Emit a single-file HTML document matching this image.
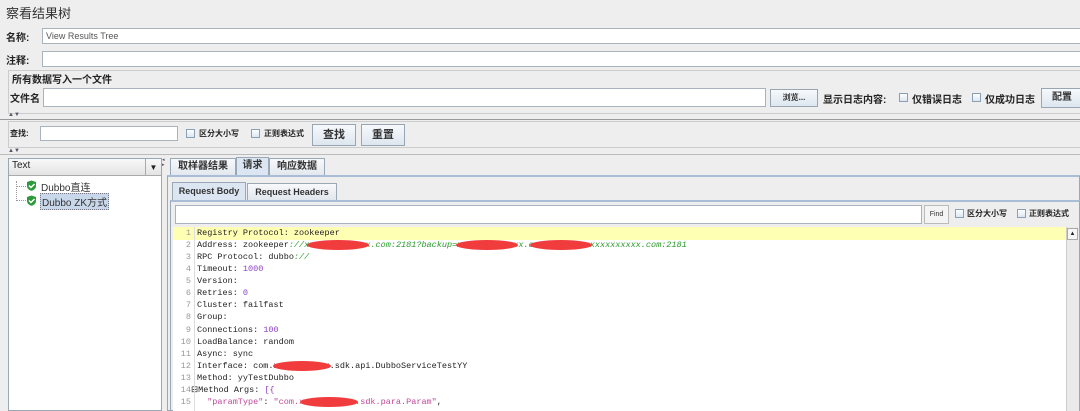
<!DOCTYPE html>
<html><head><meta charset="utf-8"><style>
*{box-sizing:border-box;margin:0;padding:0}
body{width:1080px;height:411px;overflow:hidden;background:#eeeeee;font-family:"Liberation Sans","Noto Sans CJK SC",sans-serif;font-size:10px;color:#222;position:relative}
.a{position:absolute}
.in{position:absolute;background:#fff;border:1px solid #a9b3bd}
.btn{position:absolute;border:1px solid #98a6b4;background:linear-gradient(#f6f9fc,#dde6ef);text-align:center;font-size:10px;font-weight:bold;color:#333}
.cb{position:absolute;width:9px;height:9px;border:1px solid #8aa0b4;background:linear-gradient(#fff,#dbe6f0)}
.code{position:absolute;left:173px;top:227px;width:893px;height:184px;background:#fff;font-family:"Liberation Mono",monospace;font-size:8.5px;overflow:hidden}
.ln{position:absolute;left:0;width:892px;height:12.07px;line-height:12px;white-space:pre}
.ln .n{position:absolute;left:0;width:18px;text-align:right;color:#999}
.ln .t{position:absolute;left:24px}
.g{color:#2a9a2a;font-style:italic}.p{color:#8a3cc8}.s{color:#c04898}
.red{position:absolute;background:#f03c3c;border-radius:50%}
.tab{position:absolute;border:1px solid #9aa8b6;border-bottom:none;background:linear-gradient(#f7f9fb,#e1e7ee);font-weight:bold;font-size:10px;text-align:center;line-height:16px;color:#333}
</style></head><body>
<div class="a" style="left:6px;top:3px;font-size:13px;color:#333">察看结果树</div>
<div class="a" style="left:6px;top:29px;font-weight:bold;font-size:10px">名称:</div>
<div class="in" style="left:42px;top:28px;width:1040px;height:16px;font-size:9px;color:#555;padding:2px 3px">View Results Tree</div>
<div class="a" style="left:6px;top:52px;font-weight:bold">注释:</div>
<div class="in" style="left:42px;top:51px;width:1040px;height:16px"></div>
<div class="a" style="left:8px;top:70px;width:1080px;height:44px;border:1px solid #ccc;border-right:none"></div>
<div class="a" style="left:12px;top:71px;font-weight:bold">所有数据写入一个文件</div>
<div class="a" style="left:10px;top:90px;font-weight:bold">文件名</div>
<div class="in" style="left:43px;top:88px;width:723px;height:19px"></div>
<div class="btn" style="left:770px;top:89px;width:48px;height:18px;line-height:16px;font-size:8px">浏览...</div>
<div class="a" style="left:823px;top:91px;font-weight:bold">显示日志内容:</div>
<div class="cb" style="left:899px;top:93px"></div><div class="a" style="left:912px;top:91px;font-weight:bold">仅错误日志</div>
<div class="cb" style="left:972px;top:93px"></div><div class="a" style="left:985px;top:91px;font-weight:bold">仅成功日志</div>
<div class="btn" style="left:1041px;top:88px;width:42px;height:20px;line-height:18px">配置</div>
<div class="a" style="left:8px;top:112px;font-size:6px;color:#556">▲▼</div>
<div class="a" style="left:0;top:119px;width:1080px;height:1px;background:#999"></div>
<div class="a" style="left:8px;top:121px;width:1080px;height:27px;border:1px solid #ccc;border-right:none"></div>
<div class="a" style="left:10px;top:128px;font-size:8px;font-weight:bold">查找:</div>
<div class="in" style="left:40px;top:126px;width:138px;height:15px"></div>
<div class="cb" style="left:186px;top:129px"></div><div class="a" style="left:199px;top:128px;font-size:8px;font-weight:bold">区分大小写</div>
<div class="cb" style="left:251px;top:129px"></div><div class="a" style="left:264px;top:128px;font-size:8px;font-weight:bold">正则表达式</div>
<div class="btn" style="left:312px;top:124px;width:44px;height:22px;line-height:20px;font-size:11px">查找</div>
<div class="btn" style="left:361px;top:124px;width:44px;height:22px;line-height:20px;font-size:11px">重置</div>
<div class="a" style="left:8px;top:148px;font-size:6px;color:#556">▲▼</div>
<div class="a" style="left:0;top:154px;width:1080px;height:1px;background:#bbb"></div>
<!-- left -->
<div class="a" style="left:8px;top:158px;width:154px;height:253px;border:1px solid #9aa8b6;background:#fff"></div>
<div class="a" style="left:9px;top:159px;width:152px;height:17px;background:linear-gradient(#f8f8f8,#e4e4e4);border-bottom:1px solid #aaa;padding:1px 3px;font-size:10px">Text</div>
<div class="a" style="left:145px;top:159px;width:16px;height:17px;border-left:1px solid #aaa;font-size:8px;text-align:center;line-height:17px">▼</div>
<div class="a" style="left:16px;top:181px;width:1px;height:20px;border-left:1px dotted #999"></div>
<div class="a" style="left:16px;top:186px;width:10px;border-top:1px dotted #999"></div>
<div class="a" style="left:16px;top:200px;width:10px;border-top:1px dotted #999"></div>
<svg class="a" style="left:26px;top:180px" width="11" height="11"><path d="M5.5 0.5L10 2v4c0 2.5-2 4-4.5 4.8C3 10 1 8.5 1 6V2z" fill="#2c9a3a"/><path d="M3 5.5l2 2 3.5-3.5" stroke="#fff" stroke-width="1.5" fill="none"/></svg>
<div class="a" style="left:41px;top:179px;font-size:10px;color:#333">Dubbo直连</div>
<svg class="a" style="left:26px;top:195px" width="11" height="11"><path d="M5.5 0.5L10 2v4c0 2.5-2 4-4.5 4.8C3 10 1 8.5 1 6V2z" fill="#2c9a3a"/><path d="M3 5.5l2 2 3.5-3.5" stroke="#fff" stroke-width="1.5" fill="none"/></svg>
<div class="a" style="left:40px;top:193px;padding:0 1px;background:#c8d8ea;border:1px dotted #778;font-size:10px;color:#333">Dubbo ZK方式</div>
<div class="a" style="left:162px;top:158px;width:5px;font-size:5px;color:#556;line-height:5px">◂<br>▸</div>
<!-- right tabs -->
<div class="tab" style="left:170px;top:158px;width:66px;height:18px">取样器结果</div>
<div class="tab" style="left:236px;top:157px;width:33px;height:19px;background:#dce6f2">请求</div>
<div class="tab" style="left:269px;top:158px;width:56px;height:18px">响应数据</div>
<div class="a" style="left:167px;top:175px;width:913px;height:236px;border:1px solid #9aa8b6;border-top:2px solid #a9bdd6;background:#eeeeee"></div>
<div class="tab" style="left:172px;top:182px;width:74px;height:18px;background:#dce6f2;font-size:9px">Request Body</div>
<div class="tab" style="left:247px;top:183px;width:90px;height:17px;font-size:9px">Request Headers</div>
<div class="a" style="left:170px;top:200px;width:910px;height:211px;border:1px solid #9aa8b6;border-top:2px solid #a9bdd6"></div>
<div class="in" style="left:175px;top:205px;width:747px;height:19px"></div>
<div class="a" style="left:924px;top:205px;width:25px;height:19px;border:1px solid #bbb;background:#f4f4f4;font-size:7px;text-align:center;line-height:17px;color:#333">Find</div>
<div class="cb" style="left:955px;top:209px"></div><div class="a" style="left:967px;top:208px;font-size:8px;font-weight:bold">区分大小写</div>
<div class="cb" style="left:1017px;top:209px"></div><div class="a" style="left:1029px;top:208px;font-size:8px;font-weight:bold">正则表达式</div>
<div class="code">
<div class="a" style="left:0;top:0;width:893px;height:13px;background:#ffffb4"></div>
<div class="ln" style="top:0"><span class="n">1</span><span class="t">Registry Protocol: zookeeper</span></div>
<div class="ln" style="top:12.07px"><span class="n">2</span><span class="t">Address: zookeeper<span class="g">://xxxxxxxxxxxxx.com:2181?backup=xxxxxxxxxxxxx.com:2181,xxxxxxxxxxxxx.com:2181</span></span></div>
<div class="ln" style="top:24.14px"><span class="n">3</span><span class="t">RPC Protocol: dubbo<span class="g">://</span></span></div>
<div class="ln" style="top:36.21px"><span class="n">4</span><span class="t">Timeout: <span class="p">1000</span></span></div>
<div class="ln" style="top:48.28px"><span class="n">5</span><span class="t">Version:</span></div>
<div class="ln" style="top:60.35px"><span class="n">6</span><span class="t">Retries: <span class="p">0</span></span></div>
<div class="ln" style="top:72.42px"><span class="n">7</span><span class="t">Cluster: failfast</span></div>
<div class="ln" style="top:84.49px"><span class="n">8</span><span class="t">Group:</span></div>
<div class="ln" style="top:96.56px"><span class="n">9</span><span class="t">Connections: <span class="p">100</span></span></div>
<div class="ln" style="top:108.63px"><span class="n">10</span><span class="t">LoadBalance: random</span></div>
<div class="ln" style="top:120.7px"><span class="n">11</span><span class="t">Async: sync</span></div>
<div class="ln" style="top:132.77px"><span class="n">12</span><span class="t">Interface: com.xxxxxxxxxxx.sdk.api.DubboServiceTestYY</span></div>
<div class="ln" style="top:144.84px"><span class="n">13</span><span class="t">Method: yyTestDubbo</span></div>
<div class="ln" style="top:156.91px"><span class="n">14</span><span class="t" style="left:18px">&#8863;Method Args: <span class="p">[{</span></span></div>
<div class="ln" style="top:168.98px"><span class="n">15</span><span class="t">  <span class="s">"paramType"</span>: <span class="s">"com.xxxxxxxxxxx.sdk.para.Param"</span>,</span></div>
<div class="red" style="left:134px;top:13px;width:62px;height:10px"></div>
<div class="red" style="left:283px;top:13px;width:62px;height:10px"></div>
<div class="red" style="left:357px;top:13px;width:62px;height:10px"></div>
<div class="red" style="left:100px;top:134px;width:58px;height:10px"></div>
<div class="red" style="left:127px;top:170px;width:58px;height:10px"></div>
<div class="a" style="left:21px;top:0;width:1px;height:184px;background:#ddd"></div>
</div>
<div class="a" style="left:1066px;top:227px;width:13px;height:184px;background:#eaeaea;border-left:1px solid #ccc"></div>
<div class="a" style="left:1067px;top:228px;width:11px;height:12px;border:1px solid #aaa;background:#f6f6f6;font-size:6px;text-align:center;line-height:10px">▲</div>
</body></html>
